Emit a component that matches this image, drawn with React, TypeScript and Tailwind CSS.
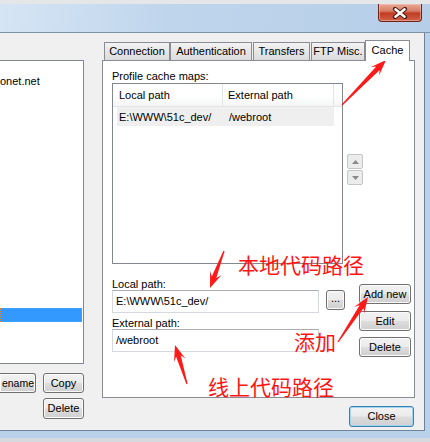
import type { ReactNode } from "react";

const btn =
  "flex items-center justify-center border border-[#707070] rounded-[3px] bg-[linear-gradient(#f2f2f2_0%,#ebebeb_48%,#dddddd_52%,#cfcfcf_100%)] shadow-[inset_0_0_0_1px_#fbfbfb] leading-[13px]";

function Button({ className, children }: { className: string; children: ReactNode }) {
  return <div className={`${btn} ${className}`}>{children}</div>;
}

function arrowPoints(x1: number, y1: number, x2: number, y2: number) {
  const dx = x2 - x1;
  const dy = y2 - y1;
  const len = Math.hypot(dx, dy);
  const ux = dx / len;
  const uy = dy / len;
  const nx = -uy;
  const ny = ux;
  const h = 16;
  const w = 6;
  const neck = 2.4;
  const bx = x2 - ux * h;
  const by = y2 - uy * h;
  const kx = x2 - ux * h * 0.72;
  const ky = y2 - uy * h * 0.72;
  const pts = [
    [x1 + nx * 0.6, y1 + ny * 0.6],
    [kx + nx * neck, ky + ny * neck],
    [bx + nx * w, by + ny * w],
    [x2, y2],
    [bx - nx * w, by - ny * w],
    [kx - nx * neck, ky - ny * neck],
    [x1 - nx * 0.6, y1 - ny * 0.6],
  ];
  return pts.map((p) => p.map((v) => v.toFixed(1)).join(",")).join(" ");
}

function Tab({ label, className }: { label: string; className: string }) {
  return (
    <div
      className={`h-[18px] border border-b-0 border-[#898c95] bg-[linear-gradient(#f3f3f3,#e4e4e4_60%,#dcdcdc)] flex items-center justify-center leading-[13px] ${className}`}
    >
      {label}
    </div>
  );
}

function Spin({ up }: { up: boolean }) {
  return (
    <div className="w-[16px] h-[15px] border border-[#c6c6c6] rounded-[2px] bg-[#ececec] flex items-center justify-center">
      <svg width="7" height="4" viewBox="0 0 7 4">
        <polygon points={up ? "3.5,0 7,4 0,4" : "0,0 7,0 3.5,4"} fill="#8a8a8a" />
      </svg>
    </div>
  );
}

export default function App() {
  return (
    <div className="relative w-[430px] h-[442px] overflow-hidden bg-[#d6d9dd] font-['Liberation_Sans',Arial,sans-serif] text-[11px] text-black">
      <div className="h-[4px] bg-[#e4e6e8]" />
      {/* title bar */}
      <div className="h-[29px] flex justify-end pr-[8px] border-b border-[#8193a8] bg-[linear-gradient(100deg,#d6e5f5_0%,#bfd5ec_40%,#b6cee8_100%)]">
        <div className="w-[44px] h-[18px] rounded-b-[4px] border border-t-0 border-[#6e2516] bg-[linear-gradient(#eaa997_0%,#d77e68_40%,#c13c22_55%,#d0634a_100%)] shadow-[inset_0_0_0_1px_rgba(255,210,200,0.45)] flex items-center justify-center">
          <svg width="16" height="12" viewBox="0 0 16 12">
            <path d="M3 2 L13 10 M13 2 L3 10" stroke="#4a1a12" strokeWidth="4.2" strokeLinecap="round" />
            <path d="M3.4 2.3 L12.6 9.7 M12.6 2.3 L3.4 9.7" stroke="#ffffff" strokeWidth="2.4" strokeLinecap="round" />
          </svg>
        </div>
      </div>

      <div className="flex bg-[#b9d1ea]">
        <div className="w-[425px] h-[398px] border-r border-b border-[#6f8399] bg-[#f0f0f0] flex">
          {/* left column */}
          <div className="w-[84px] flex flex-col pt-[27px]">
            <div className="h-[304px] bg-white border-t border-r border-b border-[#828790] flex flex-col pt-[13px]">
              <div className="h-[14px] leading-[14px] whitespace-nowrap">onet.net</div>
              <div className="mt-[220px] h-[14px] w-[82px] bg-[#3399ff] border border-dotted border-[#d9873a]" />
            </div>
            <div className="flex mt-[9px]">
              <Button className="w-[36px] h-[20px] shrink-0 !border-l-0 !rounded-l-none !justify-end pr-[1px] text-[10.5px]">ename</Button>
              <Button className="w-[41px] h-[20px] ml-[7px] shrink-0">Copy</Button>
            </div>
            <Button className="w-[41px] h-[21px] ml-[43px] mt-[5px]">Delete</Button>
          </div>

          {/* right column */}
          <div className="ml-[18px] w-[313px] flex flex-col pt-[7px]">
            <div className="flex items-end h-[20px] pl-[2px]">
              <Tab label="Connection" className="w-[66px]" />
              <Tab label="Authentication" className="w-[82px]" />
              <Tab label="Transfers" className="w-[57px] ml-[1px]" />
              <Tab label="FTP Misc." className="w-[54px] ml-[1px]" />
              <div className="relative z-10 -mb-[1px] w-[45px] h-[21px] border border-b-0 border-[#898c95] bg-white flex justify-center pt-[3px] leading-[13px]">
                Cache
              </div>
            </div>

            <div className="h-[338px] border border-[#898c95] bg-white pl-[9px] pt-[9px] flex flex-col">
              <div className="leading-[13px] h-[13px]">Profile cache maps:</div>
              <div className="flex items-start">
                <div className="w-[231px] h-[181px] border border-[#828790] bg-white flex flex-col">
                  <div className="h-[23px] flex border-b border-[#e5e5e5] bg-[linear-gradient(#ffffff,#ffffff_55%,#f4f5f6)] leading-[13px]">
                    <div className="w-[110px] pl-[6px] pt-[5px] border-r border-[#e3e4e6]">Local path</div>
                    <div className="w-[111px] pl-[5px] pt-[5px] border-r border-[#e3e4e6]">External path</div>
                  </div>
                  <div className="ml-[4px] w-[217px] h-[19px] bg-[#efefef] flex pt-[4px] leading-[13px]">
                    <div className="w-[107px] pl-[2px] whitespace-nowrap">E:\WWW\51c_dev/</div>
                    <div className="pl-[5px]">/webroot</div>
                  </div>
                </div>
                <div className="ml-[4px] mt-[71px] flex flex-col gap-[1px]">
                  <Spin up />
                  <Spin up={false} />
                </div>
              </div>

              <div className="flex items-start mt-[14px]">
                <div className="w-[207px] flex flex-col">
                  <div className="h-[12px] leading-[12px]">Local path:</div>
                  <div className="h-[23px] border border-[#d5d8de] border-t-[#abadb3] pl-[3px] pt-[4px] leading-[13px]">
                    E:\WWW\51c_dev/
                  </div>
                  <div className="h-[12px] leading-[12px] mt-[4px]">External path:</div>
                  <div className="h-[23px] border border-[#d5d8de] border-t-[#abadb3] pl-[3px] pt-[4px] leading-[13px]">
                    /webroot
                  </div>
                </div>
                <Button className="ml-[7px] mt-[12px] w-[19px] h-[20px] shrink-0">
                  <span className="-mt-[3px]">...</span>
                </Button>
                <div className="ml-[14px] mt-[6px] flex flex-col">
                  <Button className="w-[52px] h-[20px]">Add new</Button>
                  <Button className="w-[52px] h-[20px] mt-[7px]">Edit</Button>
                  <Button className="w-[52px] h-[20px] mt-[6px]">Delete</Button>
                </div>
              </div>
            </div>

            <div className="self-end mr-[1px] mt-[8px] w-[65px] h-[21px] flex items-center justify-center rounded-[3px] border border-[#3c7fb1] bg-[linear-gradient(#f2f2f2_0%,#ebebeb_48%,#dddddd_52%,#cfcfcf_100%)] shadow-[inset_0_0_0_1px_#9fd6f3] leading-[13px]">
              Close
            </div>
          </div>
        </div>
      </div>
      <div className="h-[7px] bg-[#b9d1ea]" />
      <div className="h-[4px] bg-[#d6d9dd]" />

      {/* annotations */}
      <svg className="absolute inset-0 pointer-events-none" width="430" height="442">
        <polygon points={arrowPoints(342, 105, 386, 60)} fill="#ff1a1a" />
        <polygon points={arrowPoints(224, 251, 210, 288)} fill="#ff1a1a" />
        <polygon points={arrowPoints(338, 342, 368, 297)} fill="#ff1a1a" />
        <polygon points={arrowPoints(187, 384, 175, 345)} fill="#ff1a1a" />
      </svg>
      <div className="absolute left-[238px] top-[254px] text-[21px] leading-none text-[#ff1414] font-['Noto_Sans_CJK_SC','Noto_Sans',sans-serif]">
        本地代码路径
      </div>
      <div className="absolute left-[294px] top-[331px] text-[21px] leading-none text-[#ff1414] font-['Noto_Sans_CJK_SC','Noto_Sans',sans-serif]">
        添加
      </div>
      <div className="absolute left-[208px] top-[376px] text-[21px] leading-none text-[#ff1414] font-['Noto_Sans_CJK_SC','Noto_Sans',sans-serif]">
        线上代码路径
      </div>
    </div>
  );
}
